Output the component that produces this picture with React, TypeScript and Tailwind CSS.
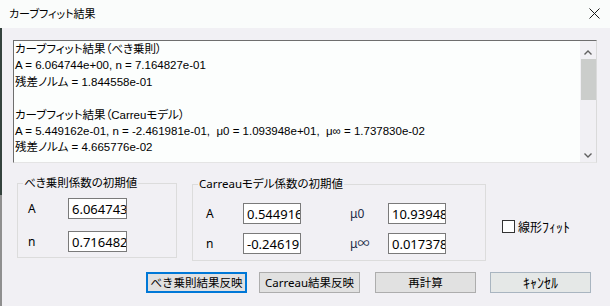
import React from 'react'

// 画面全体で使うフォント
const UI = "[font-family:'Noto_Sans','Noto_Sans_CJK_JP',sans-serif]"
const LOG = "[font-family:'Liberation_Sans','Noto_Sans_CJK_JP',sans-serif]"

const lines = [
  'カーブフィット結果（べき乗則）',
  'A = 6.064744e+00, n = 7.164827e-01',
  '残差ノルム = 1.844558e-01',
  '',
  'カーブフィット結果（Carreuモデル）',
  'A = 5.449162e-01, n = -2.461981e-01,  μ0 = 1.093948e+01,  μ∞ = 1.737830e-02',
  '残差ノルム = 4.665776e-02',
]

type GP = {
  title: string
  className?: string
  children?: React.ReactNode
}

function Group({ title, className, children }: GP) {
  return (
    <div className={`relative border border-[#dcdcdc] ${className ?? ''}`}>
      <span className="absolute left-[5px] top-[-9px] bg-[#f1f0f4] px-px text-[11.5px] leading-4 text-black [font-feature-settings:'palt']">
        {title}
      </span>
      {children}
    </div>
  )
}

function Num({ value, w }: { value: string; w: string }) {
  return (
    <input
      readOnly
      value={value}
      className={`${w} h-[21px] border border-[#7a7a7a] bg-white pl-[3px] text-[13px] text-black outline-none ${UI}`}
    />
  )
}

function Btn({ label, className }: { label: string; className?: string }) {
  return (
    <button
      className={`flex h-[21px] w-[101px] items-center justify-center text-[11.5px] text-black ${UI} ${className ?? ''}`}
    >
      {label}
    </button>
  )
}

export default function App() {
  return (
    <div className={`flex h-[306px] w-[610px] flex-col overflow-hidden bg-[#f1f0f4] ${UI}`}>
      {/* タイトルバー */}
      <div className="flex h-[28px] shrink-0 items-center justify-between bg-[#fafcfb] pl-[9px] pr-[10px]">
        <span className="text-[11px] text-black [font-feature-settings:'palt']">カーブフィット結果</span>
        <svg width="11" height="11" viewBox="0 0 11 11" className="mt-[-2px]">
          <path d="M0.5 0.5 L10.5 10.5 M10.5 0.5 L0.5 10.5" stroke="#1a1a1a" strokeWidth="1" fill="none" />
        </svg>
      </div>

      <div className="flex flex-1">
        <div className="w-[2px] shrink-0 bg-[linear-gradient(to_bottom,#34423d_0%,#34423d_60%,#8f8f8f_60%,#8f8f8f_100%)]" />

        <div className="flex flex-1 flex-col">
          {/* 結果テキスト */}
          <div className="ml-[11px] mt-[12px] flex h-[123px] w-[584px] border-t border-l border-t-[#6e6e6e] border-l-[#6e6e6e] border-r border-b border-r-[#dadada] border-b-[#e4e4e4]">
            <div className={`flex-1 overflow-hidden bg-[#fcfefd] pl-px text-[11.5px] leading-[16.4px] text-black whitespace-pre [font-feature-settings:'palt'] ${LOG}`}>
              {lines.map((l, i) => (
                <div key={i} className="h-[16.4px]">
                  {l}
                </div>
              ))}
            </div>
            <div className="relative flex w-[16px] flex-col items-center bg-[#f1f0f4]">
              <svg width="8" height="5" viewBox="0 0 8 5" className="mt-[9px]">
                <path d="M0.5 4.5 L4 1 L7.5 4.5" stroke="#606060" strokeWidth="1.4" fill="none" />
              </svg>
              <div className="mt-[4px] h-[41px] w-[15px] bg-[#cbcdcb]" />
              <div className="flex-1" />
              <svg width="8" height="5" viewBox="0 0 8 5" className="mb-[4px]">
                <path d="M0.5 0.5 L4 4 L7.5 0.5" stroke="#606060" strokeWidth="1.4" fill="none" />
              </svg>
            </div>
          </div>

          {/* 初期値 */}
          <div className="mt-[20px] flex items-start">
            <Group title="べき乗則係数の初期値" className="ml-[15px] h-[75px] w-[160px]">
              <div className="grid grid-cols-[40px_59px] items-center gap-y-[12px] pl-[10px] pt-[14px] text-[12px] text-black">
                <span>A</span>
                <Num value="6.064743" w="w-[59px]" />
                <span>n</span>
                <Num value="0.716482" w="w-[59px]" />
              </div>
            </Group>

            <Group title="Carreauモデル係数の初期値" className="ml-[15px] mt-px h-[77px] w-[294px]">
              <div className="grid grid-cols-[37px_107px_38px_58px] items-center gap-y-[9px] pl-[13px] pt-[18px] text-[12px] text-black">
                <span>A</span>
                <div>
                  <Num value="0.544916" w="w-[58px]" />
                </div>
                <span className="text-[#222b46]">μ0</span>
                <Num value="10.93948" w="w-[58px]" />
                <span>n</span>
                <div>
                  <Num value="-0.24619" w="w-[58px]" />
                </div>
                <span className="text-[#222b46]">μ∞</span>
                <Num value="0.017378" w="w-[58px]" />
              </div>
            </Group>

            <label className="ml-[16px] mt-[33px] flex items-center gap-[3px] text-[12px] text-black">
              <span className="h-[13px] w-[13px] border border-[#333] bg-white" />
              <span>
                線形<span className="text-[14px]">ﾌｨｯﾄ</span>
              </span>
            </label>
          </div>

          {/* ボタン */}
          <div className="mt-[11px] flex">
            <Btn label="べき乗則結果反映" className="ml-[144px] border-2 border-[#0078d7] bg-[#e1e1e1]" />
            <Btn label="Carreau結果反映" className="ml-[12px] border border-[#adadad] bg-[#e1e1e1]" />
            <Btn label="再計算" className="ml-[15px] border border-[#adadad] bg-[#e1e1e1]" />
            <Btn label="ｷｬﾝｾﾙ" className="ml-[14px] border border-[#a9b5c0] bg-[#e5e8e7] !text-[14px]" />
          </div>
        </div>
      </div>
    </div>
  )
}
